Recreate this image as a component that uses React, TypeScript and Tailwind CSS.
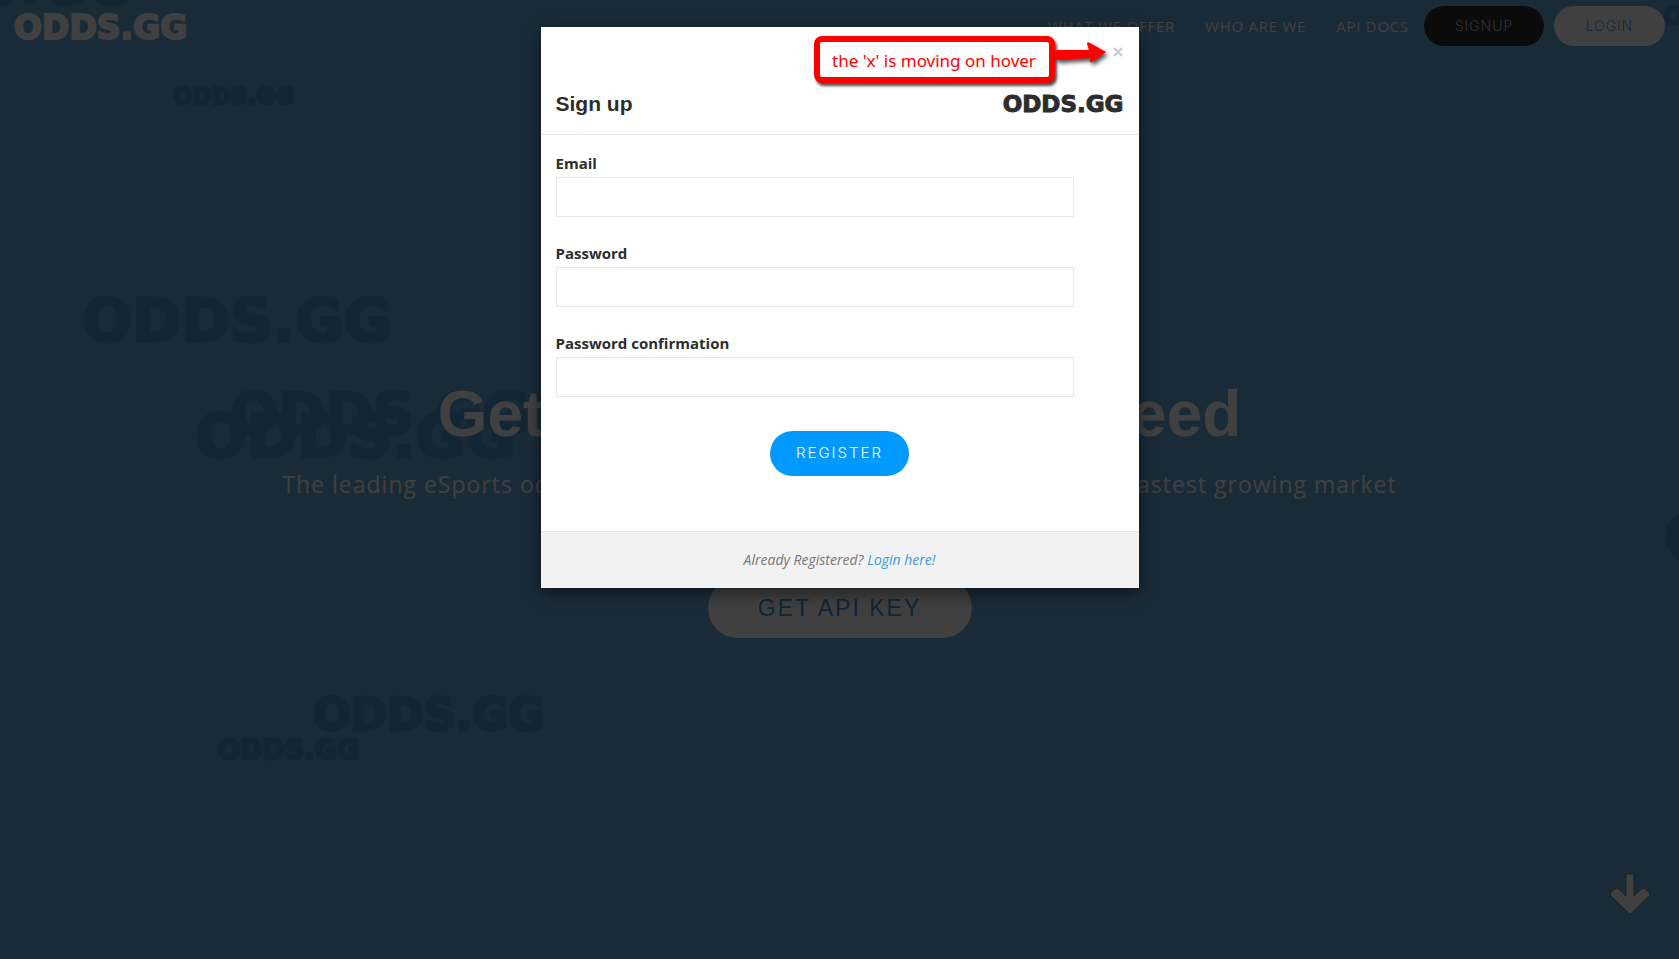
import React from "react";

const LOGO = "font-['DejaVu_Sans',sans-serif] font-bold leading-none whitespace-nowrap";

const ghosts = [
  "left-[-158px] top-[-43px] text-[55px]",
  "left-[173px] top-[85px] text-[23px]",
  "left-[82px] top-[291px] text-[59px]",
  "left-[230px] top-[386px] text-[57px]",
  "left-[195px] top-[405px] text-[61px]",
  "left-[313px] top-[693px] text-[44px]",
  "left-[217px] top-[736px] text-[27px]",
  "left-[1664px] top-[508px] text-[60px]",
  "left-[1664px] top-[4px] text-[24px]",
];

const fields = [
  { id: "email", label: "Email", type: "email" },
  { id: "password", label: "Password", type: "password" },
  { id: "confirmation", label: "Password confirmation", type: "password" },
];

function Header() {
  return (
    <header className="relative flex items-start justify-between px-3.5 pt-1.5">
      <a href="#" className={`${LOGO} pt-[5px] text-[33px] text-white [-webkit-text-stroke:2px_#fff]`}>
        ODDS.GG
      </a>
      <nav className="flex items-center text-[15px] leading-10 text-white">
        <a href="#offer" className="mr-[30px] tracking-wider">WHAT WE OFFER</a>
        <a href="#about" className="mr-[30px] tracking-wider">WHO ARE WE</a>
        <a href="#docs" className="mr-[15px] tracking-wider">API DOCS</a>
        <button className="mr-2.5 h-10 w-[120px] rounded-full bg-[#2d2d2d] font-['Inter',sans-serif] text-[14px] font-extralight tracking-[1px]">
          SIGNUP
        </button>
        <button className="h-10 w-[111px] rounded-full bg-white font-['Inter',sans-serif] text-[14px] font-extralight tracking-[1px] text-[#0a73c0]">
          LOGIN
        </button>
      </nav>
    </header>
  );
}

function Hero() {
  return (
    <main className="relative flex flex-col items-center pt-[332px] text-white">
      <h1 className="font-['Liberation_Sans',sans-serif] text-[64px] leading-[72px] font-bold whitespace-nowrap">
        Get the data that you need
      </h1>
      <p className="mt-4 text-[23px] leading-9 tracking-[1px] whitespace-nowrap">
        The leading eSports odds &amp; data provider for sportsbooks in the world’s fastest growing market
      </p>
      <button className="mt-[76px] h-[60px] w-[264px] rounded-full bg-white font-['Liberation_Sans',sans-serif] text-[23px] tracking-[2px] text-[#3c96dc]">
        GET API KEY
      </button>
    </main>
  );
}

function Callout() {
  return (
    <div className="absolute top-[9px] right-[84px] flex h-[47px] w-[241px] items-center justify-center rounded-lg border-6 border-[#f00] bg-white pt-0.5 font-['Noto_Sans',sans-serif] text-[17px] whitespace-nowrap text-[#f00] shadow-[2px_3px_3px_rgba(0,0,0,0.7)]">
      the 'x' is moving on hover
      <svg className="absolute -top-1 left-[230px] drop-shadow-[2px_3px_2px_rgba(0,0,0,0.7)]" width="60" height="34" viewBox="0 0 60 34" aria-hidden="true">
        <path d="M4 14 Q5 12 8 12 L39 12 L37 6 Q37 3 40 5 L56 14 L42 24 Q40 25 40 23 L40 20 L9 22 Q3 22 4 14Z" fill="#f00" />
      </svg>
    </div>
  );
}

function SignupDialog() {
  return (
    <div role="dialog" aria-labelledby="signup-title" className="relative mx-auto w-full max-w-[598px] bg-white text-[#2d2d2d] shadow-[0_5px_15px_rgba(0,0,0,0.5)]">
      <div className="border-b border-[#e5e5e5] px-[15px] pt-[15px] pb-4">
        <div className="flex justify-end">
          <button aria-label="Close" className="h-5 text-[#ccc]">
            <svg width="12" height="12" viewBox="0 0 12 12" aria-hidden="true">
              <path d="M2 2L10 10M10 2L2 10" stroke="currentColor" strokeWidth="2.4" />
            </svg>
          </button>
        </div>
        <div className="mt-7 flex items-center justify-between">
          <h2 id="signup-title" className="font-['Liberation_Sans',sans-serif] text-[21px] leading-7 font-bold">Sign up</h2>
          <span className={`${LOGO} text-[23px] text-[#2d2d2d] [-webkit-text-stroke:1px_#2d2d2d]`}>ODDS.GG</span>
        </div>
      </div>
      <form className="px-[15px] pt-[18px] pb-[55px]">
        {fields.map((f) => (
          <div key={f.id} className="mb-[26px] pr-[50px]">
            <label htmlFor={f.id} className="block pb-1 text-[15px] leading-5 font-bold">{f.label}</label>
            <input id={f.id} type={f.type} className="block h-10 w-full border border-[#e8e8e8] px-3 outline-none" />
          </div>
        ))}
        <div className="flex justify-center pt-2">
          <button type="button" className="h-[45px] w-[139px] rounded-full bg-[#09f] font-['Inter',sans-serif] text-[15px] font-light tracking-[2px] text-white">
            REGISTER
          </button>
        </div>
      </form>
      <div className="border-t border-[#e5e5e5] bg-[#f2f2f2] py-[18px] text-center text-[14px] leading-5 text-[#777] italic">
        Already Registered? <a href="#login" className="text-[#3c9ae0]">Login here!</a>
      </div>
      <Callout />
    </div>
  );
}

export default function App() {
  return (
    <div className="relative min-h-screen overflow-hidden bg-[#68ace0] font-['Open_Sans',sans-serif]">
      <div aria-hidden="true">
        {ghosts.map((g) => (
          <span key={g} className={`${LOGO} absolute text-[#4c98d0] [-webkit-text-stroke:3px_#4c98d0] ${g}`}>ODDS.GG</span>
        ))}
      </div>
      <Header />
      <Hero />
      <a href="#offer" aria-label="Scroll down" className="absolute right-7 bottom-11">
        <svg width="42" height="42" viewBox="0 0 42 42" aria-hidden="true">
          <path d="M17 3Q17 1 19 1H23Q25 1 25 3V23L33 15.500Q34.500 14.500 36 15.500L40.500 20Q41.500 21.500 40.500 22.500L22 40.500Q21 41.500 20 40.500L1.500 22.500Q.5 21.500 1.500 20L6 15.500Q7.500 14.500 9 15.500L17 23Z" fill="#fff" stroke="#666" strokeWidth=".8" />
        </svg>
      </a>
      <div className="absolute inset-0 bg-black/75 pt-[27px]">
        <SignupDialog />
      </div>
    </div>
  );
}
